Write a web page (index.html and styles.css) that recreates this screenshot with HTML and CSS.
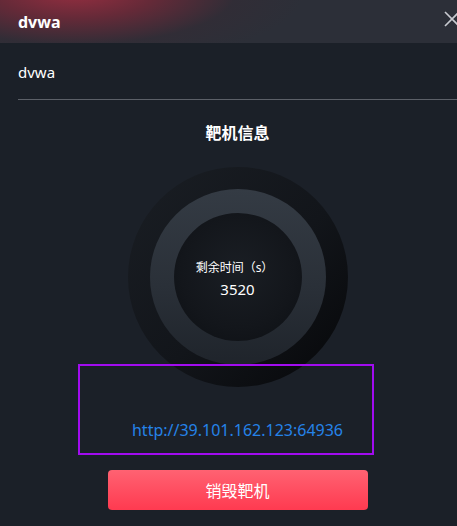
FILE: index.html
```html
<!DOCTYPE html>
<html lang="zh">
<head>
<meta charset="utf-8">
<link rel="stylesheet" href="styles.css">
</head>
<body>
<div class="dialog">
  <div class="header">
    <span class="title">dvwa</span>
    <span class="close" aria-label="close">
      <svg width="16" height="16" viewBox="0 0 16 16"><path d="M1 1 L15 15 M15 1 L1 15" stroke="#c8cad0" stroke-width="1.6" fill="none"/></svg>
    </span>
  </div>
  <div class="content">
    <div class="name">dvwa</div>
    <div class="divider"></div>
    <div class="section-title">靶机信息</div>
    <div class="ring-outer">
      <div class="ring-mid">
        <div class="ring-inner">
          <div class="label">剩余时间（s）</div>
          <div class="value">3520</div>
        </div>
      </div>
    </div>
    <a class="link" href="#">http://39.101.162.123:64936</a>
    <button class="destroy">销毁靶机</button>
  </div>
  <div class="highlight"></div>
</div>
</body>
</html>
```
FILE: styles.css
```css
html, body {
  margin: 0;
  padding: 0;
  background: #1b2028;
}
body {
  width: 457px;
  height: 526px;
  overflow: hidden;
  font-family: "Noto Sans", "Noto Sans CJK SC", sans-serif;
  color: #fff;
}
.dialog {
  position: relative;
  height: 526px;
}
.header {
  height: 43px;
  display: flex;
  align-items: center;
  justify-content: space-between;
  padding: 0 0 0 18px;
  background:
    radial-gradient(ellipse 230px 75px at 75px -8px, rgba(150,46,64,1) 0%, rgba(120,40,56,0.75) 35%, rgba(60,40,50,0.3) 70%, rgba(44,47,56,0) 100%),
    #2c2f38;
}
.title {
  font-size: 16px;
  font-weight: 700;
  line-height: 1;
}
.close {
  display: flex;
  margin-right: -3px;
  margin-top: -6px;
}
.content {
  padding-left: 18px;
  display: flex;
  flex-direction: column;
  align-items: center;
}
.name {
  align-self: flex-start;
  font-size: 15px;
  line-height: 20px;
  margin-top: 19px;
}
.divider {
  align-self: stretch;
  height: 1px;
  background: #5c6068;
  margin-top: 17px;
}
.section-title {
  font-size: 16px;
  font-weight: 700;
  line-height: 20px;
  margin-top: 23px;
}
.ring-outer {
  margin-top: 24px;
  width: 220px;
  height: 220px;
  border-radius: 50%;
  background: linear-gradient(135deg, #1a1e24 0%, #12151a 55%, #060709 100%);
  display: flex;
  align-items: center;
  justify-content: center;
}
.ring-mid {
  width: 176px;
  height: 176px;
  border-radius: 50%;
  background: linear-gradient(180deg, #343b44 0%, #2a3038 55%, #1f242b 100%);
  display: flex;
  align-items: center;
  justify-content: center;
}
.ring-inner {
  width: 128px;
  height: 128px;
  border-radius: 50%;
  background: radial-gradient(circle at 50% 45%, #1a1e24 0%, #13161b 60%, #0c0f13 100%);
  display: flex;
  flex-direction: column;
  align-items: center;
  justify-content: center;
}
.label {
  font-size: 12px;
  line-height: 16px;
  margin-left: -6px;
  margin-top: 4px;
}
.value {
  font-size: 15px;
  line-height: 20px;
  margin-top: 3px;
}
.link {
  margin-top: 32px;
  color: #2583e8;
  font-size: 16px;
  line-height: 22px;
  text-decoration: none;
}
.destroy {
  margin-top: 29px;
  width: 260px;
  height: 40px;
  border: none;
  border-radius: 4px;
  background: linear-gradient(180deg, #ff6272 0%, #ff3a50 100%);
  color: #fff;
  font-family: "Noto Sans CJK SC", sans-serif;
  font-size: 16px;
}
.highlight {
  position: absolute;
  left: 78px;
  top: 364px;
  width: 292px;
  height: 87px;
  border: 2px solid #a20cf0;
}
```
